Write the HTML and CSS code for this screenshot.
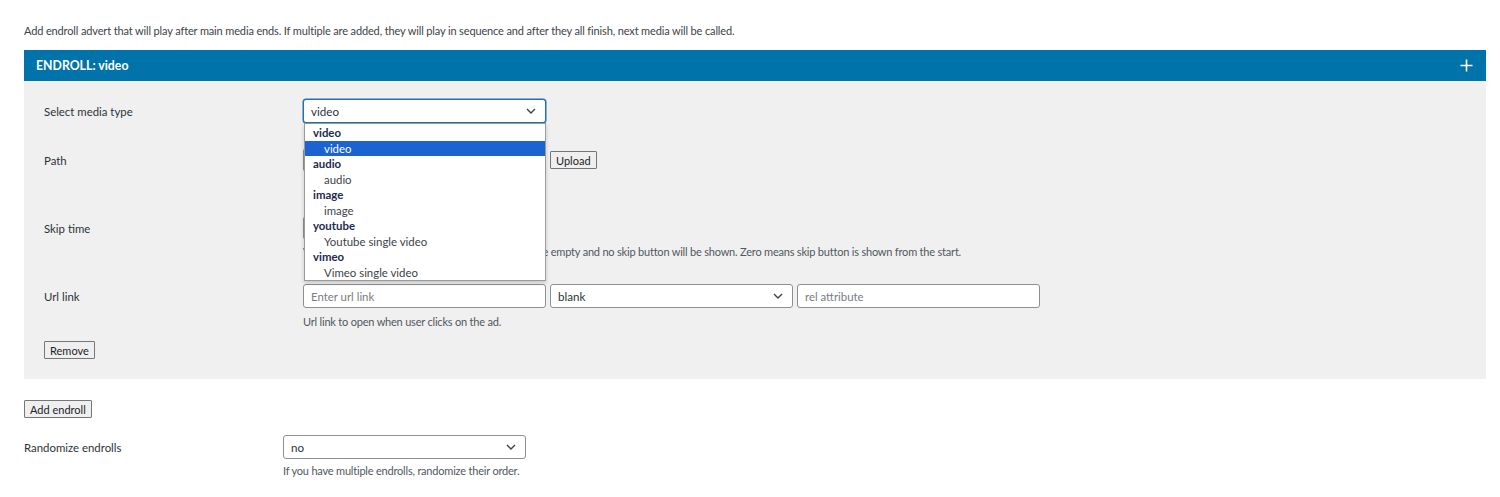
FILE: index.html
```html
<!DOCTYPE html>
<html lang="en">
<head>
  <meta charset="UTF-8">
  <title>Endroll settings</title>
  <link rel="stylesheet" href="styles.css">
</head>
<body>

  <p class="intro">Add endroll advert that will play after main media ends. If multiple are added, they will play in sequence and after they all finish, next media will be called.</p>

  <!-- endroll box -->
  <div class="box">
    <div class="box-head">
      <span>ENDROLL: video</span>
      <svg class="plus" width="13" height="13" viewBox="0 0 13 13"><path d="M6.5 0.5v12M0.5 6.5h12" stroke="#fff" stroke-width="1.6" fill="none"/></svg>
    </div>

    <div class="box-body">
      <div class="row">
        <div class="label">Select media type</div>
        <div class="field">
          <div class="select focused">
            <span>video</span>
            <svg width="10" height="6" viewBox="0 0 10 6"><path d="M1 1l4 4 4-4" stroke="#3c434a" stroke-width="1.4" fill="none"/></svg>
            <!-- open dropdown -->
            <div class="dropdown">
              <div class="group">video</div>
              <div class="opt active">video</div>
              <div class="group">audio</div>
              <div class="opt">audio</div>
              <div class="group">image</div>
              <div class="opt">image</div>
              <div class="group">youtube</div>
              <div class="opt">Youtube single video</div>
              <div class="group">vimeo</div>
              <div class="opt">Vimeo single video</div>
            </div>
          </div>
        </div>
      </div>

      <div class="row">
        <div class="label">Path</div>
        <div class="field">
          <div class="inline">
            <input class="text" type="text">
            <button class="btn">Upload</button>
          </div>
          <div class="spacer"></div>
        </div>
      </div>

      <div class="row">
        <div class="label">Skip time</div>
        <div class="field">
          <input class="text" type="text">
          <p class="desc">Value in seconds after which the skip is shown. Leave empty and no skip button will be shown. Zero means skip button is shown from the start.</p>
        </div>
      </div>

      <div class="row last">
        <div class="label">Url link</div>
        <div class="field">
          <div class="inline">
            <input class="text" type="text" placeholder="Enter url link">
            <div class="select">
              <span>blank</span>
              <svg width="10" height="6" viewBox="0 0 10 6"><path d="M1 1l4 4 4-4" stroke="#3c434a" stroke-width="1.4" fill="none"/></svg>
            </div>
            <input class="text" type="text" placeholder="rel attribute">
          </div>
          <p class="desc">Url link to open when user clicks on the ad.</p>
        </div>
      </div>

      <button class="btn">Remove</button>
    </div>
  </div>

  <button class="btn add">Add endroll</button>

  <div class="row plain">
    <div class="label">Randomize endrolls</div>
    <div class="field">
      <div class="select">
        <span>no</span>
        <svg width="10" height="6" viewBox="0 0 10 6"><path d="M1 1l4 4 4-4" stroke="#3c434a" stroke-width="1.4" fill="none"/></svg>
      </div>
      <p class="desc">If you have multiple endrolls, randomize their order.</p>
    </div>
  </div>

</body>
</html>
```

FILE: styles.css
```css
* { box-sizing: border-box; }
body {
  margin: 0;
  padding: 23px 14px 0 24px;
  font-family: 'Lato', 'Noto Sans', sans-serif;
  font-size: 12px;
  color: #3c434a;
  background: #fff;
}
.intro { margin: 0 0 11px; line-height: 16px; font-size: 11px; letter-spacing: -0.14px; }

/* endroll box */
.box-head {
  display: flex;
  justify-content: space-between;
  align-items: center;
  height: 31px;
  padding: 0 13px 0 12px;
  background: #0073aa;
  color: #fff;
  font-weight: bold;
  font-size: 12.3px;
}
.box-body { background: #f0f0f0; padding: 18px 20px 20px; }

.row { display: flex; margin-bottom: 25px; }
.row.last { margin-bottom: 12px; }
.row.plain { margin-top: 17px; }
.label { width: 259px; flex-shrink: 0; padding-top: 5px; line-height: 16px; font-size: 11.4px; color: #2c3338; }
.field { position: relative; }
.inline { display: flex; gap: 4px; align-items: center; }
.desc { margin: 4px 0 0; line-height: 15px; font-size: 11px; letter-spacing: -0.2px; color: #50575e; }
.last .desc { margin-top: 6px; }
.spacer { height: 19px; }

input.text {
  width: 243px;
  height: 24px;
  padding: 0 7px;
  border: 1px solid #8c8f94;
  border-radius: 3px;
  background: #fff;
  font: inherit;
  font-size: 11.4px;
  color: #2c3338;
}
input.text::placeholder { color: #787c82; }

.select {
  position: relative;
  display: flex;
  justify-content: space-between;
  align-items: center;
  width: 243px;
  height: 24px;
  padding: 0 9px 0 7px;
  border: 1px solid #8c8f94;
  border-radius: 3px;
  background: #fff;
  color: #2c3338;
  font-size: 11.6px;
}
.select.focused { border-color: #2271b1; box-shadow: 0 0 0 0.5px #2271b1; }

.dropdown {
  position: absolute;
  top: 23px;
  left: 0;
  width: 242px;
  padding-top: 1px;
  background: #fff;
  border: 1px solid #9a9a9a;
  box-shadow: 0 2px 4px rgba(0,0,0,0.18);
  z-index: 5;
}
.dropdown div { height: 15.5px; line-height: 15.5px; font-size: 11.4px; white-space: nowrap; }
.dropdown .group { padding-left: 8px; font-weight: bold; color: #1d2b4f; }
.dropdown .opt { padding-left: 19px; color: #3c434a; }
.dropdown .opt.active { background: #1a63d0; color: #fff; }

.btn {
  height: 18px;
  padding: 0 5px;
  border: 1px solid #767676;
  border-radius: 1px;
  background: #efefef;
  font-family: inherit;
  font-size: 11px;
  color: #1d2327;
}
.btn.add { margin-top: 21px; }
```
